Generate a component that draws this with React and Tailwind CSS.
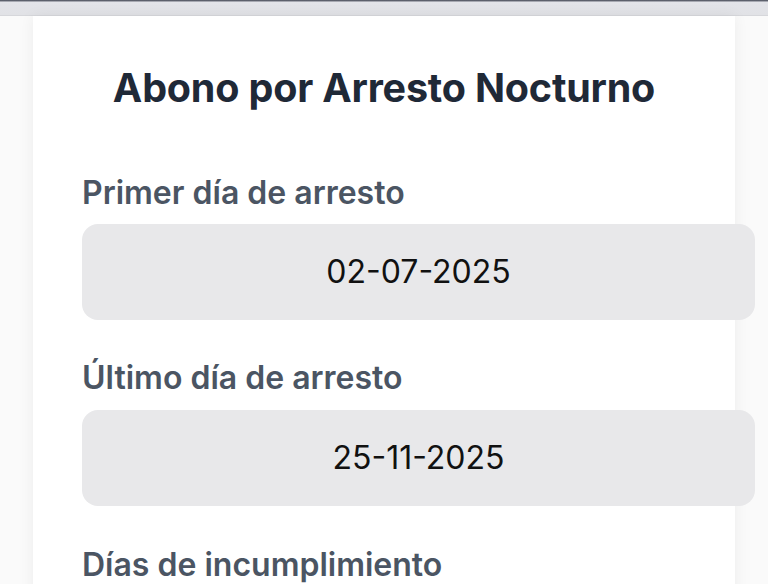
export default function App() {
  const font = { fontFamily: 'Inter, "Noto Sans", sans-serif' };
  return (
    <div className="w-[768px] h-[584px] overflow-hidden bg-[#fafafa]" style={font}>
      <div className="h-[16px] bg-gradient-to-b from-[#3b3f4c] from-[0%] via-[#e3e4e9] via-[15%] to-[#e1e2e6] border-b border-[#d6d7db]" />
      <div className="mx-[33px] h-[700px] bg-white shadow-[0_0_14px_rgba(0,0,0,0.06)] pt-[48px] pl-[49px]">
        <h1 className="text-center pr-[49px] text-[39.5px] font-bold text-[#1f2937] leading-[48px] tracking-[-0.2px] whitespace-nowrap">
          Abono por Arresto Nocturno
        </h1>
        <div className="mt-[63px] flex flex-col">
          <div className="text-[32px] font-semibold text-[#4b5563] leading-[36px] whitespace-nowrap">Primer día de arresto</div>
          <div className="mt-[13px] w-[673px] h-[96px] rounded-[16px] bg-[#e8e8ea] flex items-center justify-center text-[32px] text-[#111111]">
            02-07-2025
          </div>
          <div className="mt-[40px] text-[32px] font-semibold text-[#4b5563] leading-[36px] whitespace-nowrap">Último día de arresto</div>
          <div className="mt-[14px] w-[673px] h-[96px] rounded-[16px] bg-[#e8e8ea] flex items-center justify-center text-[32px] text-[#111111]">
            25-11-2025
          </div>
          <div className="mt-[41px] text-[32px] font-semibold text-[#4b5563] leading-[36px] whitespace-nowrap">Días de incumplimiento</div>
        </div>
      </div>
    </div>
  );
}
